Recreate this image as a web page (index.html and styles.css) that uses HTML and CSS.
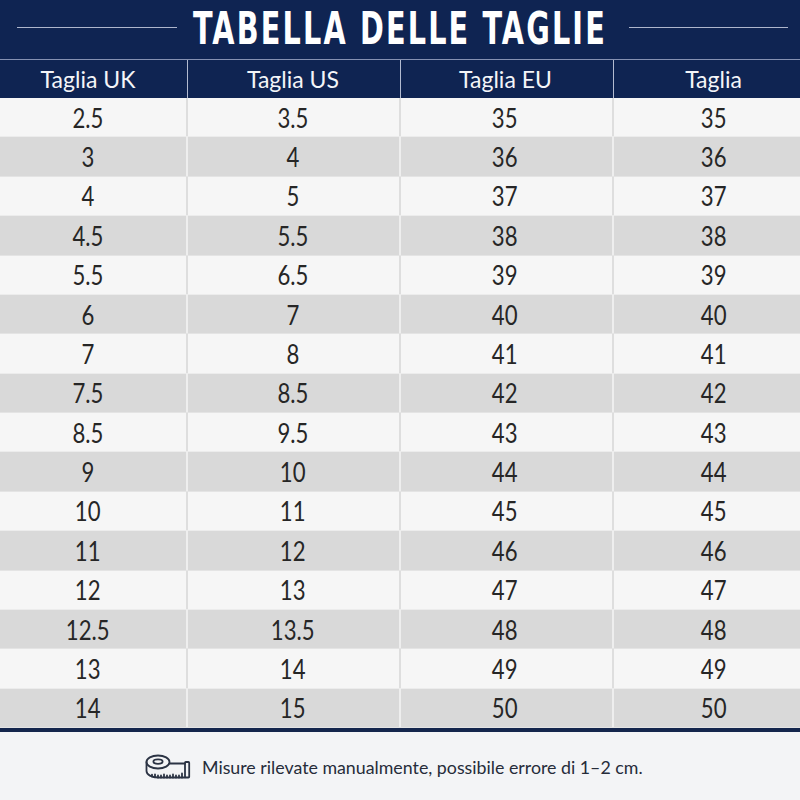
FILE: index.html
```html
<!DOCTYPE html>
<html lang="it">
<head>
<meta charset="utf-8">
<title>Tabella delle taglie</title>
<link rel="stylesheet" href="styles.css">
</head>
<body>
<div class="page">
  <header class="titlebar">
    <span class="rule"></span>
    <svg class="title" viewBox="0 0 414 58" width="414" height="58">
      <text x="0" y="43" textLength="414" lengthAdjust="spacingAndGlyphs">TABELLA DELLE TAGLIE</text>
    </svg>
    <span class="rule rule-right"></span>
  </header>
  <div class="thead">
    <div class="th">Taglia UK</div>
    <div class="th">Taglia US</div>
    <div class="th">Taglia EU</div>
    <div class="th">Taglia</div>
  </div>
  <div class="tbody">
    <div class="row"><div class="td"><span>2.5</span></div><div class="td"><span>3.5</span></div><div class="td"><span>35</span></div><div class="td"><span>35</span></div></div>
    <div class="row"><div class="td"><span>3</span></div><div class="td"><span>4</span></div><div class="td"><span>36</span></div><div class="td"><span>36</span></div></div>
    <div class="row"><div class="td"><span>4</span></div><div class="td"><span>5</span></div><div class="td"><span>37</span></div><div class="td"><span>37</span></div></div>
    <div class="row"><div class="td"><span>4.5</span></div><div class="td"><span>5.5</span></div><div class="td"><span>38</span></div><div class="td"><span>38</span></div></div>
    <div class="row"><div class="td"><span>5.5</span></div><div class="td"><span>6.5</span></div><div class="td"><span>39</span></div><div class="td"><span>39</span></div></div>
    <div class="row"><div class="td"><span>6</span></div><div class="td"><span>7</span></div><div class="td"><span>40</span></div><div class="td"><span>40</span></div></div>
    <div class="row"><div class="td"><span>7</span></div><div class="td"><span>8</span></div><div class="td"><span>41</span></div><div class="td"><span>41</span></div></div>
    <div class="row"><div class="td"><span>7.5</span></div><div class="td"><span>8.5</span></div><div class="td"><span>42</span></div><div class="td"><span>42</span></div></div>
    <div class="row"><div class="td"><span>8.5</span></div><div class="td"><span>9.5</span></div><div class="td"><span>43</span></div><div class="td"><span>43</span></div></div>
    <div class="row"><div class="td"><span>9</span></div><div class="td"><span>10</span></div><div class="td"><span>44</span></div><div class="td"><span>44</span></div></div>
    <div class="row"><div class="td"><span>10</span></div><div class="td"><span>11</span></div><div class="td"><span>45</span></div><div class="td"><span>45</span></div></div>
    <div class="row"><div class="td"><span>11</span></div><div class="td"><span>12</span></div><div class="td"><span>46</span></div><div class="td"><span>46</span></div></div>
    <div class="row"><div class="td"><span>12</span></div><div class="td"><span>13</span></div><div class="td"><span>47</span></div><div class="td"><span>47</span></div></div>
    <div class="row"><div class="td"><span>12.5</span></div><div class="td"><span>13.5</span></div><div class="td"><span>48</span></div><div class="td"><span>48</span></div></div>
    <div class="row"><div class="td"><span>13</span></div><div class="td"><span>14</span></div><div class="td"><span>49</span></div><div class="td"><span>49</span></div></div>
    <div class="row"><div class="td"><span>14</span></div><div class="td"><span>15</span></div><div class="td"><span>50</span></div><div class="td"><span>50</span></div></div>
  </div>
  <footer class="note">
    <svg class="tape" viewBox="0 0 46 26" width="46" height="26" fill="none" stroke="#2b3344" stroke-width="1.8" stroke-linecap="round" stroke-linejoin="round">
      <ellipse cx="13" cy="8" rx="11.5" ry="6.5"/>
      <ellipse cx="13" cy="7.6" rx="4.6" ry="2.3"/>
      <path d="M1.5 8v9c0 3.6 5.1 6.5 11.5 6.5H40"/>
      <path d="M24.5 9.5H40"/>
      <rect x="40" y="8" width="4.2" height="15.5" rx="0.8"/>
      <path d="M7 22.6v-2M10 23.3v-3M13 23.5v-2M16 23.5v-2M19 23.5v-3M22 23.5v-2M25 23.5v-2M28 23.5v-3M31 23.5v-2M34 23.5v-2M37 23.5v-4"/>
    </svg>
    <span class="note-text">Misure rilevate manualmente, possibile errore di 1–2 cm.</span>
  </footer>
</div>
</body>
</html>
```

FILE: styles.css
```css
* { box-sizing: border-box; }
html, body { margin: 0; padding: 0; }
body {
  width: 800px;
  height: 800px;
  background: #f3f4f6;
  font-family: Lato, "Open Sans", sans-serif;
  overflow: hidden;
}
.page { width: 800px; }

.titlebar {
  height: 59px;
  background: #0f2452;
  display: flex;
  align-items: center;
  padding: 0 12px 0 17px;
  gap: 16px;
}
.rule {
  display: block;
  width: 160px;
  height: 1.5px;
  background: #aeb6cc;
  margin-top: -4px;
}
.rule-right { margin-left: 6px; width: 159px; }
.title { display: block; flex: none; overflow: visible; }
.title text {
  font-family: "DejaVu Sans Condensed", "DejaVu Sans", sans-serif;
  font-weight: bold;
  font-size: 44px;
  letter-spacing: 3px;
  fill: #ffffff;
}

.thead {
  display: grid;
  grid-template-columns: 188px 213px 213px 186px;
  height: 39px;
  background: #0f2452;
  border-top: 1.5px solid #8591b2;
}
.th {
  display: flex;
  align-items: center;
  justify-content: center;
  color: #f4f5f8;
  font-size: 23px;
  border-right: 1.5px solid #b3bbd0;
}
.th:last-child { border-right: none; }

.tbody { display: flex; flex-direction: column; }
.row {
  display: grid;
  grid-template-columns: 188px 213px 213px 186px;
  height: 39.375px;
  background: #f6f6f6;
  border-bottom: 1px solid #ececec;
}
.row:nth-child(even) { background: #d9d9d9; border-bottom-color: #e4e4e4; }
.td {
  display: flex;
  align-items: center;
  justify-content: center;
  border-right: 2px solid #dedede;
  color: #262626;
  font-size: 27px;
  line-height: 1;
}
.row:nth-child(even) .td { border-right-color: #eeeeee; }
.td:last-child { border-right: none; }
.td span {
  display: inline-block;
  transform: scaleX(0.82);
}

.th:first-child, .td:first-child { padding-right: 11px; }
.th:last-child, .td:last-child { padding-left: 13px; }
.th:nth-child(2), .td:nth-child(2) { padding-right: 2px; }
.th:nth-child(3), .td:nth-child(3) { padding-right: 3px; }

.note {
  border-top: 4px solid #14264d;
  height: 67px;
  background: #f3f4f6;
  display: flex;
  align-items: center;
  justify-content: flex-start;
  gap: 11px;
  padding: 6px 0 0 145px;
}
.tape { display: block; flex: none; }
.note-text {
  color: #262c3a;
  font-size: 17.8px;
}
```
